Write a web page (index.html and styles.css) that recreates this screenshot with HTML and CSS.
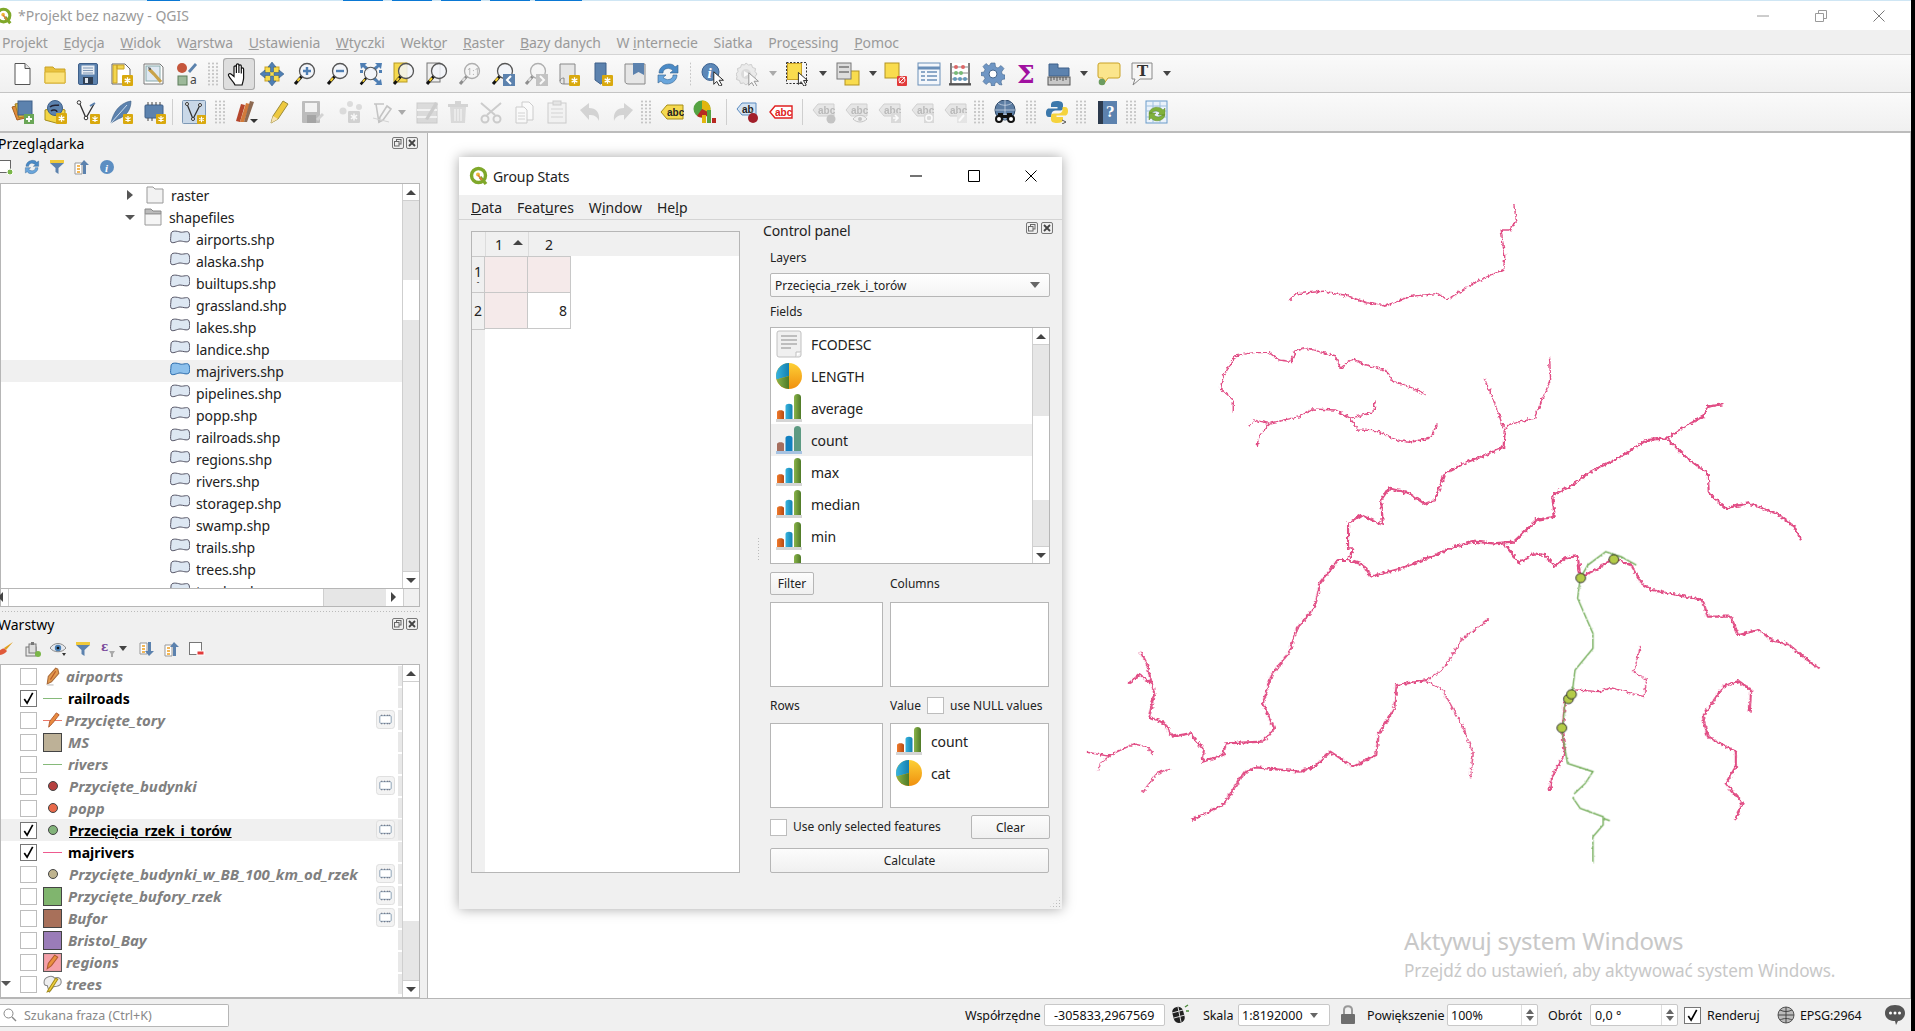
FILE: index.html
```html
<!DOCTYPE html>
<html lang="pl">
<head>
<meta charset="utf-8">
<title>*Projekt bez nazwy - QGIS</title>
<link rel="stylesheet" href="styles.css">
</head>
<body>
<svg class="sprite" aria-hidden="true">
<defs>
<linearGradient id="go"><stop offset="0" stop-color="#ef7a2c"/><stop offset="1" stop-color="#b84a12"/></linearGradient>
<linearGradient id="gb"><stop offset="0" stop-color="#38b4de"/><stop offset="1" stop-color="#1480b0"/></linearGradient>
<linearGradient id="gg"><stop offset="0" stop-color="#8ab44a"/><stop offset="1" stop-color="#4f7a28"/></linearGradient>
<linearGradient id="gp2" x2="0" y2="1"><stop offset="0" stop-color="#fdd035"/><stop offset="1" stop-color="#f0900f"/></linearGradient>
<symbol id="badge" viewBox="0 0 10 10"><rect width="10" height="10" rx="1" fill="#d9a90e"/><path d="M5 2v6M2.4 3.5l5.2 3M2.4 6.5l5.2-3" stroke="#fff" stroke-width="1.2"/></symbol>
<symbol id="qgis" viewBox="0 0 20 20"><circle cx="9.5" cy="9.5" r="7" fill="none" stroke="#7fa82a" stroke-width="3.4"/><path d="M11 11l6 7" stroke="#7fa82a" stroke-width="3.4"/><circle cx="9" cy="8.5" r="2" fill="#f0b93a"/><path d="M9 9l4 5" stroke="#e07a3a" stroke-width="1.6"/></symbol>
<symbol id="new" viewBox="0 0 24 24"><path d="M5 1.5h10l5 5v16H5z" fill="#fff" stroke="#555"/><path d="M15 1.5v5h5" fill="#e4e4e4" stroke="#555"/></symbol>
<symbol id="open" viewBox="0 0 24 24"><path d="M2 5h8l2 2h10v14H2z" fill="#e9c23e" stroke="#c9a227"/><path d="M2 10h20v11H2z" fill="#fbe27c" stroke="#d8b332"/></symbol>
<symbol id="save" viewBox="0 0 24 24"><rect x="2.5" y="1.5" width="19" height="21" rx="1.5" fill="#5c82ae" stroke="#3f608a"/><rect x="5.5" y="3.5" width="13" height="9" fill="#e8edf3"/><path d="M7 6h10M7 8.500h10M7 11h10" stroke="#7f97b5"/><rect x="7" y="15" width="10" height="7" fill="#2f3e52"/><rect x="9" y="16" width="3" height="5" fill="#dfe6ee"/></symbol>
<symbol id="np" viewBox="0 0 24 24"><path d="M3 2h13l5 5v15H3z" fill="#fff" stroke="#666"/><path d="M4 3h4v18H4zM8 3h7v4H8z" fill="#f3d64e" stroke="#c9a227"/><use href="#badge" x="13" y="13" width="11" height="11"/></symbol>
<symbol id="lm" viewBox="0 0 24 24"><path d="M2 2h16l3 3v17H2z" fill="#fff" stroke="#777"/><rect x="4" y="4" width="14" height="15" fill="#dfe8f2" stroke="#8aa"/><path d="M7 7l5 5 7 8" stroke="#c8a24a" stroke-width="3.200" fill="none"/><path d="M6 5l3 1v2H7z" fill="#666"/></symbol>
<symbol id="sm" viewBox="0 0 24 24"><circle cx="7" cy="6" r="5" fill="#c5563c"/><path d="M14 10l7-8" stroke="#5b82ad" stroke-width="2.800"/><rect x="3" y="14" width="9" height="9" fill="#9db99a" stroke="#5c7c5a"/><text x="15" y="22" class="svgt" font-size="12" fill="#444">a</text></symbol>
<symbol id="hand" viewBox="0 0 24 24"><path d="M8 23c-1-3-5-6-6.500-9.500-.5-1.500 1.500-2.500 2.500-1.500l3 2.500V5c0-1.600 2.400-1.600 2.400 0v6V3c0-1.600 2.500-1.600 2.500 0v8V4c0-1.600 2.400-1.600 2.400 0v7.500V7c0-1.500 2.300-1.500 2.300 0v9c0 2.500-1 4-1.500 7z" fill="#fff" stroke="#111" stroke-width="1.200"/></symbol>
<symbol id="pan" viewBox="0 0 24 24"><rect x="5" y="5" width="14" height="14" fill="#f7dc4b" stroke="#c9a227"/><path d="M12 0l4 5h-2.500v5h-3V5H8zM12 24l4-5h-2.500v-5h-3v5H8zM0 12l5-4v2.500h5v3H5V16zM24 12l-5-4v2.500h-5v3h5V16z" fill="#4f7fb4" stroke="#33587f" stroke-width=".5"/></symbol>
<symbol id="lens" viewBox="0 0 24 24"><path d="M9 14l-7 8" stroke="#111" stroke-width="3"/><path d="M7 16l-2.500 3" stroke="#f2cd30" stroke-width="2"/><circle cx="14" cy="9" r="7.500" fill="#f2f5f9" fill-opacity=".85" stroke="#555" stroke-width="1.300"/></symbol>
<symbol id="zi" viewBox="0 0 24 24"><use href="#lens" width="24" height="24"/><path d="M14 5v8M10 9h8" stroke="#4f7fb4" stroke-width="2.400"/></symbol>
<symbol id="zo" viewBox="0 0 24 24"><use href="#lens" width="24" height="24"/><path d="M10 9h8" stroke="#4f7fb4" stroke-width="2.400"/></symbol>
<symbol id="zf" viewBox="0 0 24 24"><path d="M1 1h7L6 3l5 4-3 2-4-4-2 2zM23 1h-7l2 2-5 4 3 2 4-4 2 2zM23 23h-7l2-2-5-4 3-2 4 4 2-2z" fill="#4f7fb4"/><path d="M1 8h3v3H1zM20 8h3v3h-3z" fill="#4f7fb4"/><use href="#lens" width="20" height="20" y="4"/></symbol>
<symbol id="zs" viewBox="0 0 24 24"><rect x="2" y="1" width="13" height="19" fill="#f5d94f" stroke="#b89a22"/><use href="#lens" width="24" height="24"/></symbol>
<symbol id="zl" viewBox="0 0 24 24"><rect x="2" y="1" width="13" height="19" fill="#eee" stroke="#777"/><use href="#lens" width="24" height="24"/></symbol>
<symbol id="zn" viewBox="0 0 24 24"><use href="#lens" width="24" height="24"/><text x="9" y="13" class="svgt" font-size="9" fill="#555">1:1</text></symbol>
<symbol id="zb" viewBox="0 0 24 24"><use href="#lens" width="24" height="24"/><rect x="12" y="12" width="12" height="12" fill="#5c82ae"/><path d="M20 14l-4 4 4 4" stroke="#fff" stroke-width="2" fill="none"/></symbol>
<symbol id="zx" viewBox="0 0 24 24"><use href="#lens" width="24" height="24"/><rect x="12" y="12" width="12" height="12" fill="#888"/><path d="M16 14l4 4-4 4" stroke="#fff" stroke-width="2" fill="none"/></symbol>
<symbol id="nm" viewBox="0 0 24 24"><path d="M3 2h15v20H7c-3 0-4-1-4-3z" fill="#e6e6e6" stroke="#888"/><path d="M3 19c0-2 2-3 4-3v6" fill="none" stroke="#888"/><use href="#badge" x="12" y="13" width="11" height="11"/></symbol>
<symbol id="sb" viewBox="0 0 24 24"><path d="M5 1h11v17l-5.500 4L5 18z" fill="#5c82ae" stroke="#3f608a"/><use href="#badge" x="12" y="13" width="11" height="11"/></symbol>
<symbol id="bm" viewBox="0 0 24 24"><path d="M2 2h20v20H6c-3 0-4-1-4-3z" fill="#e6e6e6" stroke="#888"/><path d="M10 1h11v12l-5.500-3-5.500 3z" fill="#5c82ae"/></symbol>
<symbol id="rf" viewBox="0 0 24 24"><path d="M3 11C3 5 9 2 13 2c3 0 5 1 6 3l3-2v8h-8l3-2.500C15 7 13 6 11 6.500 8 7 7 9 7 11z" fill="#4a8ac6" stroke="#33628f" stroke-width=".6"/><path d="M21 13c0 6-6 9-10 9-3 0-5-1-6-3l-3 2v-8h8l-3 2.500C9 17 11 18 13 17.500c3-.5 4-2.500 4-4.500z" fill="#6aa6dc" stroke="#33628f" stroke-width=".6"/></symbol>
<symbol id="cur" viewBox="0 0 24 24"><path d="M12 10v13l3-3 3 5 2.500-1.200-3-5h4.500z" transform="translate(-3 -2) scale(1.050)" fill="#fff" stroke="#222"/></symbol>
<symbol id="id" viewBox="0 0 24 24"><circle cx="9.500" cy="10" r="8.500" fill="#5c88b8" stroke="#3c6290"/><text x="6.500" y="16" class="svgti" font-size="15" fill="#fff">i</text><use href="#cur" x="4" y="2" width="22" height="22"/></symbol>
<symbol id="ac" viewBox="0 0 24 24"><path d="M10 1l2.500 2 3-.5 1 3 3 1-.5 3L21 12l-2 2.500.5 3-3 1-1 3-3-.5L10 23l-2.500-2-3 .5-1-3-3-1 .5-3L0 12l2-2.500-.5-3 3-1 1-3 3 .5z" fill="#ddd" stroke="#999"/><circle cx="10" cy="12" r="5" fill="#bbb"/><path d="M8 9l5 3-5 3z" fill="#fff"/><use href="#cur" x="4" y="3" width="22" height="22"/></symbol>
<symbol id="sl" viewBox="0 0 24 24"><rect x=".5" y=".5" width="20" height="21" fill="none" stroke="#333" stroke-dasharray="2 1.500"/><rect x="1.500" y="1.500" width="14" height="16" fill="#f9dc4e" stroke="#c9a227"/><use href="#cur" x="4" y="3" width="21" height="21"/></symbol>
<symbol id="sa" viewBox="0 0 24 24"><rect x="9" y="9" width="14" height="14" fill="#f9dc4e" stroke="#b39322"/><rect x="1" y="1" width="14" height="16" fill="#ddd" stroke="#777"/><path d="M3 5h10M3 10h10" stroke="#777" stroke-width="1.500"/></symbol>
<symbol id="ds" viewBox="0 0 24 24"><rect x="1" y="1" width="14" height="15" fill="#f9dc4e" stroke="#b39322"/><rect x="13" y="14" width="10" height="10" rx="1" fill="#e23a3a"/><path d="M15 21l6-6M18 15a3 3 0 1 1-.1 0" stroke="#fff" fill="none"/></symbol>
<symbol id="at" viewBox="0 0 24 24"><rect x="1" y="1" width="22" height="22" fill="#f4f7fb" stroke="#6a8fb8"/><path d="M1 6h22" stroke="#6a8fb8" stroke-width="3"/><path d="M4 10h4M10 10h10M4 14h4M10 14h10M4 18h4M10 18h10" stroke="#6a8fb8" stroke-width="1.400"/></symbol>
<symbol id="tb" viewBox="0 0 24 24"><path d="M3 1v21h18V1M1 22h22" stroke="#555" stroke-width="1.500" fill="#fff"/><path d="M1 22.500h22" stroke="#555" stroke-width="2"/><path d="M3 5h18M3 11h18M3 17h18" stroke="#888"/><circle cx="8" cy="5" r="2" fill="#d66"/><circle cx="15" cy="5" r="2" fill="#d66"/><circle cx="8" cy="11" r="2" fill="#7b7"/><circle cx="13" cy="11" r="2" fill="#7b7"/><circle cx="7" cy="17" r="2" fill="#69b"/><circle cx="12" cy="17" r="2" fill="#69b"/><circle cx="17" cy="17" r="2" fill="#69b"/></symbol>
<symbol id="gr" viewBox="0 0 24 24"><path d="M10 1h4l.5 4 2.500 1 3-2.500 3 3L20.500 10l1 2.500 2.500.5v4l-3 .5-1 2.500L21 23l-3-.5-2-2.500-2 1-.5 3h-3L10 21l-2-1-3 2.500-3-3L4 16.500 3 14 0 13.500v-3L3 10l1-2.500-2-3 3-3L8 4z" fill="#6f96c4" stroke="#46688f" stroke-width=".6"/><circle cx="12" cy="12" r="4" fill="#fff" stroke="#46688f"/></symbol>
<symbol id="sg" viewBox="0 0 24 24"><text x="3" y="21" class="svgs" font-size="25" fill="#a010a0">Σ</text></symbol>
<symbol id="ms" viewBox="0 0 24 24"><path d="M2 2h9v4h11v8H2z" fill="#5c82ae" stroke="#3f608a"/><rect x="1" y="15" width="22" height="8" fill="#c8c8c8" stroke="#555"/><path d="M4 15v4M7 15v3M10 15v4M13 15v3M16 15v4M19 15v3" stroke="#555"/></symbol>
<symbol id="tp" viewBox="0 0 24 24"><path d="M3 1h18a2 2 0 0 1 2 2v11a2 2 0 0 1-2 2H11l-5 7v-7H3a2 2 0 0 1-2-2V3a2 2 0 0 1 2-2z" fill="#fbe58c" stroke="#c9a227"/><circle cx="5" cy="20" r="3.300" fill="#6b9b5f"/></symbol>
<symbol id="tx" viewBox="0 0 24 24"><path d="M2 1h20v16H10l-7 6 2-6H2z" fill="#f6f6f6" stroke="#888"/><text x="7" y="14" class="svgs" font-size="15" fill="#333">T</text></symbol>
<symbol id="dsm" viewBox="0 0 24 24"><path d="M2 7l12-3 5 13-12 3z" fill="#e08a3a" stroke="#a5601f"/><path d="M5 4l12-2 4 13-12 3z" fill="#dcb33c" stroke="#a5801f"/><rect x="8" y="1" width="14" height="14" fill="#5c82ae" stroke="#3f608a"/><rect x="14" y="14" width="10" height="10" fill="#6aa657"/><path d="M19 16v6M16 19h6" stroke="#fff" stroke-width="1.800"/></symbol>
<symbol id="gp" viewBox="0 0 24 24"><path d="M2 10l11-3 9 3v10l-9 3-11-3z" fill="#f2d544" stroke="#a58d1a"/><circle cx="12" cy="8" r="7.500" fill="#5c82ae" stroke="#3f608a"/><path d="M7 7c3-3 6-1 9-2M8 11c2-2 6-1 6 1" stroke="#223" stroke-width="1.500" fill="none"/><use href="#badge" x="13" y="13" width="11" height="11"/></symbol>
<symbol id="ns" viewBox="0 0 24 24"><path d="M3 2l7 16 8-14" fill="none" stroke="#333" stroke-width="1.300"/><circle cx="3" cy="2.500" r="1.800" fill="#fff" stroke="#333"/><circle cx="10" cy="18" r="1.800" fill="#fff" stroke="#333"/><path d="M14 6l5-3" stroke="#5c82ae" stroke-width="2"/><use href="#badge" x="14" y="14" width="10" height="10"/></symbol>
<symbol id="ft" viewBox="0 0 24 24"><path d="M2 23C4 13 10 3 22 1c0 8-4 15-13 18z" fill="#5c82ae" stroke="#3a5c82" stroke-width=".6"/><path d="M2 23L18 5" stroke="#cfe0f0"/><use href="#badge" x="14" y="14" width="10" height="10"/></symbol>
<symbol id="tm" viewBox="0 0 24 24"><rect x="3" y="5" width="18" height="13" rx="1" fill="#5c82ae" stroke="#3f608a"/><path d="M6 2v3M10 2v3M14 2v3M18 2v3M6 18v3M10 18v3" stroke="#444"/><use href="#badge" x="14" y="14" width="10" height="10"/></symbol>
<symbol id="mv" viewBox="0 0 24 24"><rect x=".5" y=".5" width="23" height="23" rx="1" fill="#c9d8e8" stroke="#7d98b5"/><path d="M5 4l6 15 7-14" fill="none" stroke="#333" stroke-width="1.300"/><circle cx="5" cy="4" r="1.500" fill="#fff" stroke="#333"/><circle cx="18" cy="5" r="1.500" fill="#fff" stroke="#333"/><circle cx="11" cy="19" r="1.500" fill="#fff" stroke="#333"/><use href="#badge" x="15" y="15" width="9" height="9"/></symbol>
<symbol id="pc" viewBox="0 0 24 24"><path d="M2 21L7 4l4 1-5 17z" fill="#b5462c"/><path d="M6 22L12 3l4 1-6 18z" fill="#d27a3a"/><path d="M10 22L16 1l4 1-7 20z" fill="#8d6a52"/><path d="M16 19h8l-4 4z" fill="#333"/></symbol>
<symbol id="pe" viewBox="0 0 24 24"><path d="M4 23l2-7L16 1l5 3-10 15z" fill="#eec93f" stroke="#9a8a3a"/><path d="M4 23l2-7 5 3z" fill="#f6e2b0"/></symbol>
<symbol id="sv" viewBox="0 0 24 24"><rect x="2" y="1" width="18" height="22" rx="1" fill="#777"/><rect x="5" y="3" width="12" height="9" fill="#eee"/><rect x="7" y="15" width="9" height="8" fill="#444"/><path d="M17 20l6-6" stroke="#aaa" stroke-width="3"/></symbol>
<symbol id="ap" viewBox="0 0 24 24"><circle cx="4" cy="11" r="3.500" fill="#bbb"/><circle cx="11" cy="4" r="3" fill="#bbb"/><circle cx="20" cy="7" r="3" fill="#bbb"/><use href="#badge" x="9" y="11" width="12" height="12"/></symbol>
<symbol id="sk" viewBox="0 0 24 24"><path d="M4 4h10M6 4l3 19M17 6l4 3-8 11-4 2 1-5z" fill="none" stroke="#888" stroke-width="1.600"/><path d="M3 18l16 4" stroke="#aaa"/></symbol>
<symbol id="te" viewBox="0 0 24 24"><rect x="2" y="3" width="20" height="20" fill="#ccb98b" stroke="#998"/><path d="M2 10h20M2 17h20" stroke="#fff" stroke-width="1.500"/><path d="M10 19L20 2l3 2-10 16z" fill="#999"/></symbol>
<symbol id="trs" viewBox="0 0 24 24"><path d="M2 4h20v3H2z" fill="#aaa"/><rect x="9" y="1" width="6" height="3" fill="#aaa"/><path d="M4 7h16l-1 16H5z" fill="#bbb"/><path d="M9 9v12M12 9v12M15 9v12" stroke="#fff"/></symbol>
<symbol id="sc" viewBox="0 0 24 24"><path d="M2 3l14 12M22 3L8 15" stroke="#999" stroke-width="2"/><circle cx="6" cy="19" r="3.500" fill="none" stroke="#999" stroke-width="2"/><circle cx="18" cy="19" r="3.500" fill="none" stroke="#999" stroke-width="2"/></symbol>
<symbol id="cp" viewBox="0 0 24 24"><path d="M10 2h7l4 4v14H10z" fill="#fff" stroke="#999"/><path d="M4 7h8l3 3v13H4z" fill="#fff" stroke="#999"/><path d="M6 13h7M6 16h7M6 19h7" stroke="#aaa"/></symbol>
<symbol id="ps" viewBox="0 0 24 24"><rect x="3" y="3" width="18" height="20" fill="#eee" stroke="#999"/><rect x="8" y="1" width="8" height="4" fill="#ccc" stroke="#999"/><path d="M6 9h12M6 13h12M6 17h12" stroke="#aaa"/></symbol>
<symbol id="un" viewBox="0 0 24 24"><path d="M2 10l9-7v5c7 0 11 4 10 13-2-5-5-6-10-6v5z" fill="#aaa"/></symbol>
<symbol id="re" viewBox="0 0 24 24"><path d="M22 10l-9-7v5C6 8 2 12 3 21c2-5 5-6 10-6v5z" fill="#aaa"/></symbol>
<symbol id="la" viewBox="0 0 24 24"><path d="M1 12l6-7h16v14H7z" fill="#f5d94f" stroke="#a58d1a"/><text x="7" y="16" class="svgb" font-size="10" fill="#222">abc</text></symbol>
<symbol id="dg" viewBox="0 0 24 24"><circle cx="9" cy="9" r="8.500" fill="#55a342"/><path d="M9 9V.5a8.500 8.500 0 0 1 7.500 12.500z" fill="#e2b60f"/><path d="M9 9l7.500 4A8.500 8.500 0 0 1 4 16z" fill="#b82a22"/><rect x="9" y="15" width="4" height="8" fill="#e2b60f"/><rect x="14" y="10" width="4" height="13" fill="#55a342"/><rect x="19" y="18" width="4" height="5" fill="#b82a22"/></symbol>
<symbol id="lb" viewBox="0 0 24 24"><path d="M1 9l5-6h14v12H6z" fill="#d2e2f2" stroke="#5b8bc0"/><text x="6" y="13" class="svgb" font-size="10" fill="#222">ab</text><path d="M16 10v6" stroke="#888"/><circle cx="17" cy="18" r="5" fill="#a21f2a"/></symbol>
<symbol id="lr" viewBox="0 0 24 24"><path d="M1 12l5-6h17v12H6z" fill="#fff" stroke="#e02020" stroke-width="1.400"/><text x="6" y="16" class="svgb" font-size="10" fill="#e02020">abc</text></symbol>
<symbol id="lg" viewBox="0 0 24 24"><path d="M1 10l5-6h16v12H6z" fill="#ddd" stroke="#bbb"/><text x="6" y="14" class="svgb" font-size="10" fill="#999">abc</text></symbol>
<symbol id="g1" viewBox="0 0 24 24"><use href="#lg" width="24" height="24"/><circle cx="19" cy="19" r="4.500" fill="#aaa"/></symbol>
<symbol id="g2" viewBox="0 0 24 24"><use href="#lg" width="24" height="24"/><path d="M8 19c4-5 10-5 14 0-4 4-10 4-14 0z" fill="#eee" stroke="#aaa"/><circle cx="15" cy="19" r="2" fill="#aaa"/></symbol>
<symbol id="g3" viewBox="0 0 24 24"><use href="#lg" width="24" height="24"/><rect x="13" y="13" width="10" height="10" fill="#ccc"/><path d="M15 18h4M17 15l3 3-3 3" stroke="#fff" stroke-width="1.600" fill="none"/></symbol>
<symbol id="g4" viewBox="0 0 24 24"><use href="#lg" width="24" height="24"/><rect x="13" y="13" width="10" height="10" fill="#ccc"/><circle cx="18" cy="18" r="3" stroke="#fff" stroke-width="1.500" fill="none"/></symbol>
<symbol id="g5" viewBox="0 0 24 24"><use href="#lg" width="24" height="24"/><rect x="13" y="13" width="10" height="10" fill="#ddd"/><path d="M15 21l5-6" stroke="#fff" stroke-width="2"/></symbol>
<symbol id="bi" viewBox="0 0 24 24"><circle cx="12" cy="10" r="10" fill="#5c7da3" stroke="#2f4a6a"/><path d="M2 10h20M12 0v20M5 3c4 3 10 3 14 0M5 17c4-3 10-3 14 0" stroke="#d5e0ec" stroke-width=".7" fill="none"/><circle cx="6" cy="19" r="4" fill="#111"/><circle cx="18" cy="19" r="4" fill="#111"/><rect x="5" y="13" width="5" height="6" fill="#111"/><rect x="14" y="13" width="5" height="6" fill="#111"/><rect x="9" y="15" width="6" height="3" fill="#111"/><circle cx="6" cy="19" r="2" fill="#fff"/><circle cx="18" cy="19" r="2" fill="#fff"/></symbol>
<symbol id="py" viewBox="0 0 24 24"><path d="M12 1c-4 0-6 1-6 3.500V7h6.500v1.500H4C1.500 8.500 1 11 1 13s.5 4 3 4h2.500v-3c0-2 2-3.500 4-3.500h5c1.500 0 2.500-1 2.500-2.500V4.500C18 2 15.500 1 12 1z" fill="#3c78ab"/><path d="M12 23c4 0 6-1 6-3.500V17h-6.500v-1.500H20c2.500 0 3-2.500 3-4.500s-.5-4-3-4h-2.500v3c0 2-2 3.500-4 3.500h-5C7 13.500 6 14.500 6 16v3.500C6 22 8.500 23 12 23z" fill="#f5d33d"/><path d="M17 20l4 2-4 2" fill="none" stroke="#555"/></symbol>
<symbol id="hp" viewBox="0 0 24 24"><rect x="3" y="1" width="19" height="23" fill="#5c82ae"/><rect x="3" y="1" width="5" height="23" fill="#2d3b4e"/><text x="11" y="17" class="svgs" font-size="14" fill="#fff">?</text></symbol>
<symbol id="tr2" viewBox="0 0 24 24"><rect x="1" y="1" width="21" height="22" fill="#eaf2fa" stroke="#6a9bc9"/><path d="M1 6h21M1 11h21M1 17h21M8 1v22M15 1v22" stroke="#9ec0df"/><path d="M4 13c1-6 10-8 14-3l2-2v7h-7l2-2c-3-3-7-2-8 0zM20 15c-1 6-10 8-14 3l-2 2v-7h7l-2 2c3 3 7 2 8 0z" fill="#7fb13c" stroke="#557f24" stroke-width=".4"/></symbol>
<symbol id="pa" viewBox="0 0 16 16"><rect x=".5" y="1.500" width="12" height="12" fill="#fff" stroke="#666"/><circle cx="12" cy="13" r="3" fill="#7ab648" stroke="#fff"/></symbol>
<symbol id="fl" viewBox="0 0 16 16"><path d="M1 2h14v2L9.500 9v6L6.500 13V9L1 4z" fill="#5c82ae"/><path d="M1 1h14v3H1z" fill="#f0c93a"/></symbol>
<symbol id="cl" viewBox="0 0 16 16"><path d="M1 4h7v11H1z" fill="#fff" stroke="#999"/><path d="M3 7h3M3 10h3M3 13h3" stroke="#f0a020" stroke-width="1.500"/><path d="M10 1l5 5h-3v9H9V6H6z" fill="#5c82ae"/></symbol>
<symbol id="xp" viewBox="0 0 16 16"><path d="M1 2h7v11H1z" fill="#fff" stroke="#999"/><path d="M3 5h3M3 8h3M3 11h3" stroke="#f0a020" stroke-width="1.500"/><path d="M10 15l5-5h-3V1H9v9H6z" fill="#5c82ae"/></symbol>
<symbol id="in" viewBox="0 0 16 16"><circle cx="8" cy="8" r="7" fill="#5c8ec2"/><text x="6" y="12.500" class="svgti" font-size="11" fill="#fff">i</text></symbol>
<symbol id="br" viewBox="0 0 16 16"><path d="M15 1L8 9l-2-2z" fill="#e0a020"/><path d="M1 10c2-2 5-3 6-2l2 2c-1 2-5 4-8 4z" fill="#e05a3a"/></symbol>
<symbol id="ag" viewBox="0 0 16 16"><rect x="1" y="6" width="10" height="9" fill="#e8e8e8" stroke="#777"/><rect x="4" y="3" width="7" height="9" fill="#ddd" stroke="#777"/><path d="M6 1h3v3H6z" fill="#777"/><circle cx="13" cy="13" r="3" fill="#7ab648"/></symbol>
<symbol id="ey" viewBox="0 0 16 16"><path d="M0 7c4-6 12-6 16 0-4 5-12 5-16 0z" fill="#e4e8ee" stroke="#8a8a8a"/><circle cx="8" cy="7" r="3.200" fill="#4a7fb4"/><circle cx="8" cy="7" r="1.300" fill="#111"/><path d="M12 12h4l-2 3z" fill="#333"/></symbol>
<symbol id="ex" viewBox="0 0 16 16"><text x="1" y="10" class="svgs" font-size="12" fill="#7b4b9b">ε</text><path d="M9 10h6l-2 3v3h-2v-3z" fill="#aaa"/></symbol>
<symbol id="rm" viewBox="0 0 16 16"><rect x=".5" y="1.500" width="12" height="12" fill="#fff" stroke="#777"/><rect x="8" y="10" width="7" height="4" fill="#e23a3a" stroke="#fff"/></symbol>
<symbol id="fold" viewBox="0 0 18 18"><path d="M1 1h6l2 2h8v14H1z" fill="#f2f2f2" stroke="#999"/></symbol>
<symbol id="fold2" viewBox="0 0 18 18"><path d="M1 1h6l2 2h8v3H1z" fill="#bbb" stroke="#888"/><path d="M1 6h16v11H1z" fill="#f5f5f5" stroke="#999"/></symbol>
<symbol id="shp" viewBox="0 0 20 14"><path d="M1 4c0-4 6-3 9-2s8-2 9 1c1 3 1 6 0 8-2 2-6 0-9 0s-7 3-9 1C0 10 1 7 1 4z" fill="#dde7f2" stroke="#556"/></symbol>
<symbol id="shps" viewBox="0 0 20 14"><path d="M1 4c0-4 6-3 9-2s8-2 9 1c1 3 1 6 0 8-2 2-6 0-9 0s-7 3-9 1C0 10 1 7 1 4z" fill="#8cc0ec" stroke="#2a6aaa"/></symbol>
<symbol id="pen" viewBox="0 0 18 18"><path d="M4 16l1-7 7-8 2 1 1 4-7 8z" fill="#e39a4e" stroke="#a86a3a"/><path d="M7 12l5-8" stroke="#b85a2a" stroke-width="1.200"/><path d="M4 17h6" stroke="#bbb"/></symbol>
<symbol id="penr" viewBox="0 0 20 18"><path d="M0 9h20" stroke="#e87060"/><path d="M6 16l1-6 7-9 3 2-7 9z" fill="#e98a3e" stroke="#b05a30"/></symbol>
<symbol id="reg" viewBox="0 0 18 18"><rect x=".5" y=".5" width="17" height="17" fill="#f4a0a8" stroke="#555"/><path d="M4 15l1-5 6-8 3 2-6 8z" fill="#e9903e" stroke="#b05a30"/></symbol>
<symbol id="tre" viewBox="0 0 18 18"><path d="M1 7c0-6 8-7 10-4 4-2 7 1 6 5-1 3-5 3-7 3L6 16l-2-6C2 10 1 9 1 7z" fill="#eee" stroke="#888"/><path d="M5 14l7-11 2 1-7 11-3 1z" fill="#f2d33e" stroke="#a58d1a"/></symbol>
<symbol id="chip" viewBox="0 0 20 20"><rect x=".5" y=".5" width="19" height="19" rx="3" fill="#f3f3f3" stroke="#ddd"/><rect x="4" y="6" width="12" height="8" rx="1" fill="#fff" stroke="#8aa0b5"/><path d="M6 5v1M9 5v1M12 5v1M14 5v1M6 14v1M9 14v1M12 14v1M14 14v1" stroke="#556"/></symbol>
<symbol id="bars" viewBox="0 0 26 28"><rect y="25" width="26" height="3" fill="#d5d5d5"/><path d="M1 25v-7c0-2.500 7-2.500 7 0v7z" fill="url(#go)"/><path d="M9.500 25V12c0-3 7-3 7 0v13z" fill="url(#gb)"/><path d="M18 25V3c0-4 7-4 7 0v22z" fill="url(#gg)"/></symbol>
<symbol id="barss" viewBox="0 0 26 28"><rect y="25" width="26" height="3" fill="#a6c3e2"/><path d="M1 25v-7c0-2.500 7-2.500 7 0v7z" fill="#a56e5e"/><path d="M9.500 25V12c0-3 7-3 7 0v13z" fill="#1280c0"/><path d="M18 25V3c0-4 7-4 7 0v22z" fill="#5d9a82"/></symbol>
<symbol id="pie" viewBox="0 0 26 28"><circle cx="13" cy="14" r="13" fill="url(#gp2)"/><path d="M13 14V1A13 13 0 0 0 .500 17.500z" fill="url(#gb)"/><path d="M13 14L.500 17.500A13 13 0 0 0 13 27z" fill="url(#gg)"/></symbol>
<symbol id="doc" viewBox="0 0 26 28"><rect x="1" y="1" width="24" height="26" rx="2" fill="#f0f0f0" stroke="#c0c0c0"/><path d="M5 6h16M5 10h16M5 14h16M5 18h10" stroke="#8c8c8c"/><path d="M20 27v-5h5" fill="#fff" stroke="#c0c0c0"/></symbol>
<symbol id="fl1" viewBox="0 0 12 12"><rect x=".5" y=".5" width="11" height="11" rx="1.500" fill="#eee" stroke="#777"/><rect x="4.500" y="2.500" width="4.500" height="4.500" fill="none" stroke="#666"/><rect x="2.500" y="4.500" width="4.500" height="4.500" fill="#eee" stroke="#666"/></symbol>
<symbol id="fl2" viewBox="0 0 12 12"><rect x=".5" y=".5" width="11" height="11" rx="1.500" fill="#eee" stroke="#777"/><path d="M3 3l6 6M9 3l-6 6" stroke="#444" stroke-width="1.800"/></symbol>
<symbol id="chk" viewBox="0 0 16 16"><path d="M3.500 8.500l3 4.500 6-11" fill="none" stroke="#000" stroke-width="1.800"/></symbol>
<symbol id="mouse" viewBox="0 0 20 22"><rect x="3" y="3" width="11" height="16" rx="5" fill="#222" transform="rotate(-15 8 11)"/><path d="M2 9l11-3M4 14l11-3M8 3l3 15" stroke="#ddd"/><path d="M15 3l3-2M16 7l3 0" stroke="#4a8a3a" stroke-width="1.400"/></symbol>
<symbol id="lock" viewBox="0 0 16 20"><path d="M4 9V5c0-5 8-5 8 0v4" fill="none" stroke="#999" stroke-width="2"/><rect x="1" y="9" width="14" height="10" rx="1" fill="#6e6e6e"/></symbol>
<symbol id="globe" viewBox="0 0 18 18"><circle cx="9" cy="9" r="8" fill="#bbb" stroke="#555"/><path d="M1 9h16M9 1v16M3 4c4 2 8 2 12 0M3 14c4-2 8-2 12 0" stroke="#444" fill="none"/></symbol>
<symbol id="msg" viewBox="0 0 20 22"><path d="M10 1c6 0 10 3 10 8s-4 8-7 8l-2 4-1-4C4 17 0 14 0 9s4-8 10-8z" fill="#555"/><circle cx="5.500" cy="9" r="1.500" fill="#fff"/><circle cx="10" cy="9" r="1.500" fill="#fff"/><circle cx="14.500" cy="9" r="1.500" fill="#fff"/></symbol>
<symbol id="srch" viewBox="0 0 14 14"><circle cx="5.500" cy="5.500" r="4.500" fill="none" stroke="#888"/><path d="M9 9l4 4" stroke="#888" stroke-width="1.400"/></symbol>
</defs>
</svg>

<div class="app">
  <div class="strip"><i class="s1"></i><i class="s2"></i><i class="s3"></i><i class="s3"></i><i class="s3"></i><i class="s4"></i></div>
  <header class="titlebar">
    <svg class="logo"><use href="#qgis"/></svg>
    <span class="wintitle">*Projekt bez nazwy - QGIS</span>
    <div class="winbtns">
      <svg class="wb" viewBox="0 0 12 12"><path d="M0 6h12" stroke="#9a9a9a"/></svg>
      <svg class="wb" viewBox="0 0 12 12"><path d="M.5 3.500h8v8h-8zM3.500 3.500v-3h8v8h-3" fill="none" stroke="#9a9a9a"/></svg>
      <svg class="wb" viewBox="0 0 12 12"><path d="M.5.500l11 11M11.500.500l-11 11" stroke="#777"/></svg>
    </div>
  </header>
  <nav class="menubar">
    <span>Projekt</span><span><u>E</u>dycja</span><span><u>W</u>idok</span><span>W<u>a</u>rstwa</span><span><u>U</u>stawienia</span><span><u>W</u>tyczki</span><span>Wekt<u>o</u>r</span><span><u>R</u>aster</span><span><u>B</u>azy danych</span><span>W <u>i</u>nternecie</span><span>Siatka</span><span>Pro<u>c</u>essing</span><span><u>P</u>omoc</span>
  </nav>
  <div class="toolbar">
    <svg class="ic"><use href="#new"/></svg><svg class="ic"><use href="#open"/></svg><svg class="ic"><use href="#save"/></svg><svg class="ic"><use href="#np"/></svg><svg class="ic"><use href="#lm"/></svg><svg class="ic"><use href="#sm"/></svg>
    <i class="grip"></i>
    <svg class="ic on"><use href="#hand"/></svg><svg class="ic"><use href="#pan"/></svg><svg class="ic"><use href="#zi"/></svg><svg class="ic"><use href="#zo"/></svg><svg class="ic"><use href="#zf"/></svg><svg class="ic"><use href="#zs"/></svg><svg class="ic"><use href="#zl"/></svg><svg class="ic off"><use href="#zn"/></svg><svg class="ic"><use href="#zb"/></svg><svg class="ic off"><use href="#zx"/></svg><svg class="ic"><use href="#nm"/></svg><svg class="ic"><use href="#sb"/></svg><svg class="ic"><use href="#bm"/></svg><svg class="ic"><use href="#rf"/></svg>
    <i class="grip thin"></i>
    <svg class="ic"><use href="#id"/></svg><svg class="ic off ml2"><use href="#ac"/></svg><i class="dd off"></i><svg class="ic"><use href="#sl"/></svg><i class="dd"></i><svg class="ic"><use href="#sa"/></svg><i class="dd"></i><svg class="ic mln2"><use href="#ds"/></svg><svg class="ic"><use href="#at"/></svg><svg class="ic mln2"><use href="#tb"/></svg><svg class="ic"><use href="#gr"/></svg><svg class="ic"><use href="#sg"/></svg><svg class="ic"><use href="#ms"/></svg><i class="dd"></i><svg class="ic"><use href="#tp"/></svg><svg class="ic"><use href="#tx"/></svg><i class="dd"></i>
  </div>
  <div class="toolbar second">
    <svg class="ic"><use href="#dsm"/></svg><svg class="ic"><use href="#gp"/></svg><svg class="ic"><use href="#ns"/></svg><svg class="ic"><use href="#ft"/></svg><svg class="ic"><use href="#tm"/></svg>
    <i class="sep mln3"></i>
    <svg class="ic"><use href="#mv"/></svg>
    <i class="grip"></i>
    <svg class="ic"><use href="#pc"/></svg><svg class="ic"><use href="#pe"/></svg><svg class="ic off"><use href="#sv"/></svg><svg class="ic off ml6"><use href="#ap"/></svg><svg class="ic off mln2"><use href="#sk"/></svg><i class="dd off mln5"></i><svg class="ic off"><use href="#te"/></svg><svg class="ic off mln2"><use href="#trs"/></svg><svg class="ic off"><use href="#sc"/></svg><svg class="ic off"><use href="#cp"/></svg><svg class="ic off"><use href="#ps"/></svg><svg class="ic off"><use href="#un"/></svg><svg class="ic off"><use href="#re"/></svg>
    <i class="grip mln3"></i>
    <svg class="ic"><use href="#la"/></svg><svg class="ic"><use href="#dg"/></svg>
    <i class="sep"></i>
    <svg class="ic"><use href="#lb"/></svg><svg class="ic"><use href="#lr"/></svg>
    <i class="sep"></i>
    <svg class="ic off2"><use href="#g1"/></svg><svg class="ic off2"><use href="#g2"/></svg><svg class="ic off2"><use href="#g3"/></svg><svg class="ic off2"><use href="#g4"/></svg><svg class="ic off2"><use href="#g5"/></svg>
    <i class="grip mln3"></i>
    <svg class="ic"><use href="#bi"/></svg>
    <i class="grip"></i>
    <svg class="ic"><use href="#py"/></svg>
    <i class="grip mln2"></i>
    <svg class="ic"><use href="#hp"/></svg>
    <i class="grip mln2"></i>
    <svg class="ic"><use href="#tr2"/></svg>
  </div>

  <main class="main">
    <aside class="dock">
      <section class="panel browser">
        <div class="ptitle"><span>Przeglądarka</span><svg class="pb"><use href="#fl1"/></svg><svg class="pb"><use href="#fl2"/></svg></div>
        <div class="picons b-icons">
          <svg class="pi first"><use href="#pa"/></svg><svg class="pi"><use href="#rf"/></svg><svg class="pi"><use href="#fl"/></svg><svg class="pi"><use href="#cl"/></svg><svg class="pi"><use href="#in"/></svg>
        </div>
        <div class="treebox">
          <div class="treewrap">
            <div class="tree">
              <div class="trow folder"><i class="arr r"></i><svg class="fi"><use href="#fold"/></svg><span>raster</span></div>
              <div class="trow folder"><i class="arr d"></i><svg class="fi"><use href="#fold2"/></svg><span>shapefiles</span></div>
              <div class="trow"><svg class="si"><use href="#shp"/></svg><span>airports.shp</span></div>
              <div class="trow"><svg class="si"><use href="#shp"/></svg><span>alaska.shp</span></div>
              <div class="trow"><svg class="si"><use href="#shp"/></svg><span>builtups.shp</span></div>
              <div class="trow"><svg class="si"><use href="#shp"/></svg><span>grassland.shp</span></div>
              <div class="trow"><svg class="si"><use href="#shp"/></svg><span>lakes.shp</span></div>
              <div class="trow"><svg class="si"><use href="#shp"/></svg><span>landice.shp</span></div>
              <div class="trow sel"><svg class="si"><use href="#shps"/></svg><span>majrivers.shp</span></div>
              <div class="trow"><svg class="si"><use href="#shp"/></svg><span>pipelines.shp</span></div>
              <div class="trow"><svg class="si"><use href="#shp"/></svg><span>popp.shp</span></div>
              <div class="trow"><svg class="si"><use href="#shp"/></svg><span>railroads.shp</span></div>
              <div class="trow"><svg class="si"><use href="#shp"/></svg><span>regions.shp</span></div>
              <div class="trow"><svg class="si"><use href="#shp"/></svg><span>rivers.shp</span></div>
              <div class="trow"><svg class="si"><use href="#shp"/></svg><span>storagep.shp</span></div>
              <div class="trow"><svg class="si"><use href="#shp"/></svg><span>swamp.shp</span></div>
              <div class="trow"><svg class="si"><use href="#shp"/></svg><span>trails.shp</span></div>
              <div class="trow"><svg class="si"><use href="#shp"/></svg><span>trees.shp</span></div>
              <div class="trow"><svg class="si"><use href="#shp"/></svg><span>tundra.shp</span></div>
            </div>
            <div class="vsb t-sb"><b class="up"></b><i class="tk" style="height:79px"></i><i class="th" style="height:40px"></i><i class="tk fill"></i><b class="dn"></b></div>
          </div>
          <div class="hsb"><b class="lf"></b><i class="hth"></i><i class="htk"></i><b class="rt"></b><i class="corner"></i></div>
        </div>
      </section>
      <i class="vgrip"></i>
      <section class="panel layers">
        <div class="ptitle"><span>Warstwy</span><svg class="pb"><use href="#fl1"/></svg><svg class="pb"><use href="#fl2"/></svg></div>
        <div class="picons l-icons">
          <svg class="pi first"><use href="#br"/></svg><svg class="pi"><use href="#ag"/></svg><svg class="pi"><use href="#ey"/></svg><svg class="pi"><use href="#fl"/></svg><svg class="pi"><use href="#ex"/></svg><i class="dd ddp"></i><svg class="pi"><use href="#xp"/></svg><svg class="pi"><use href="#cl"/></svg><svg class="pi"><use href="#rm"/></svg>
        </div>
        <div class="laybox">
          <div class="lrows">
            <div class="lrow"><span class="cb"></span><svg class="sym"><use href="#pen"/></svg><em class="n n1">airports</em><i class="ind"></i></div>
            <div class="lrow on"><span class="cb ck"><svg><use href="#chk"/></svg></span><span class="sym line lgreen"></span><em class="n">railroads</em><i class="ind"></i></div>
            <div class="lrow"><span class="cb"></span><svg class="sym"><use href="#penr"/></svg><em class="n n0">Przycięte_tory</em><svg class="chip"><use href="#chip"/></svg><i class="ind"></i></div>
            <div class="lrow"><span class="cb"></span><span class="sym sq ms"></span><em class="n">MS</em><i class="ind"></i></div>
            <div class="lrow"><span class="cb"></span><span class="sym line lgreen"></span><em class="n">rivers</em><i class="ind"></i></div>
            <div class="lrow"><span class="cb"></span><span class="sym"><i class="dot d1"></i></span><em class="n n2">Przycięte_budynki</em><svg class="chip"><use href="#chip"/></svg><i class="ind"></i></div>
            <div class="lrow"><span class="cb"></span><span class="sym"><i class="dot d2"></i></span><em class="n n2">popp</em><i class="ind"></i></div>
            <div class="lrow on cur"><span class="cb ck"><svg><use href="#chk"/></svg></span><span class="sym"><i class="dot d3"></i></span><em class="n n2 active">Przecięcia_rzek_i_torów</em><svg class="chip"><use href="#chip"/></svg><i class="ind"></i></div>
            <div class="lrow on"><span class="cb ck"><svg><use href="#chk"/></svg></span><span class="sym line lpink"></span><em class="n">majrivers</em><i class="ind"></i></div>
            <div class="lrow"><span class="cb"></span><span class="sym"><i class="dot d4"></i></span><em class="n n2">Przycięte_budynki_w_BB_100_km_od_rzek</em><svg class="chip"><use href="#chip"/></svg><i class="ind"></i></div>
            <div class="lrow"><span class="cb"></span><span class="sym sq gr"></span><em class="n">Przycięte_bufory_rzek</em><svg class="chip"><use href="#chip"/></svg><i class="ind"></i></div>
            <div class="lrow"><span class="cb"></span><span class="sym sq br"></span><em class="n">Bufor</em><svg class="chip"><use href="#chip"/></svg><i class="ind"></i></div>
            <div class="lrow"><span class="cb"></span><span class="sym sq pu"></span><em class="n">Bristol_Bay</em><i class="ind"></i></div>
            <div class="lrow"><span class="cb"></span><svg class="sym"><use href="#reg"/></svg><em class="n n1">regions</em><i class="ind"></i></div>
            <div class="lrow"><i class="arr d tw"></i><span class="cb"></span><svg class="sym"><use href="#tre"/></svg><em class="n n1">trees</em><i class="ind"></i></div>
            <div class="lrow"><span class="spacer"></span><span class="sym sq gr child"></span></div>
          </div>
          <div class="vsb"><b class="up"></b><i class="th" style="height:239px"></i><i class="tk fill"></i><b class="dn"></b></div>
        </div>
      </section>
    </aside>

    <div class="map">
      <svg class="rivers" viewBox="1070 180 800 740" width="800" height="740" aria-hidden="true">
        <defs><filter id="jag" x="-5%" y="-5%" width="110%" height="110%"><feTurbulence type="fractalNoise" baseFrequency="0.3" numOctaves="2" seed="4"/><feDisplacementMap in="SourceGraphic" scale="5" xChannelSelector="R" yChannelSelector="G"/></filter></defs>
        <g filter="url(#jag)" fill="none" stroke="#e14d85" stroke-linejoin="round">
          <g transform="translate(1070 180) scale(.5102 .3333)">
            <polyline class="thin" points="430,360 442,342 500,333 520,342 540,345 580,368 618,378 665,350 720,340 738,360 790,310 850,268 852,230 845,150 862,150 875,120 870,75"/>
            <polyline class="thin" points="695,642 680,630 630,600 620,572 575,552 552,538 530,565 520,528 460,503 440,515 435,545 410,540 390,518 360,518 325,527 300,590 295,625 320,660 320,698"/>
            <polyline class="thin" points="598,658 596,695 550,715 520,690 475,687 450,710 390,730 360,720 350,740"/>
            <polyline class="thin" points="390,732 370,770 367,798"/>
            <polyline class="thin" points="548,712 565,750 600,752 640,780 665,787 705,775 720,733"/>
            <polyline class="thin" points="940,533 942,600 925,660 910,715 860,733 852,750"/>
            <polyline class="thin" points="812,595 830,660 850,745"/>
            <polyline class="mid" points="852,750 850,800 815,825 780,845 735,880 715,960 695,972 665,940 625,925 610,960 613,1035 570,1005 545,1030 545,1105 555,1105 548,1135"/>
            <polyline class="mid" points="1283,672 1250,680 1240,710 1205,740 1170,775 1130,780 1080,830 1020,875 980,920 945,945 950,1010 915,1020 870,1085 830,1090 790,1085 745,1105 700,1135 650,1165 590,1190"/>
            <polyline class="mid" points="850,1090 880,1148 910,1120 930,1125 950,1160 970,1135 995,1128 1000,1190"/>
            <polyline class="mid" points="1170,775 1210,835 1250,880 1252,940 1285,985 1330,970 1385,1000 1420,1040 1433,1082"/>
          </g>
          <g transform="translate(1070 520) scale(.5102 .3333)">
            <polyline class="mid" points="590,170 575,135 545,120 525,120 490,190 480,260 445,325 430,395 395,465 378,550 400,625 378,665 305,670 300,705 260,725 262,690 235,640 200,650 185,610 155,590 165,520 150,430 138,395"/>
            <polyline class="mid" points="115,490 135,465 160,490"/>
            <polyline class="mid" points="1000,170 1030,150 1065,115 1100,135 1120,190 1140,210 1240,240 1250,290 1295,290 1310,345 1350,330 1375,360 1410,375 1445,420 1467,445"/>
            <polyline class="mid" points="238,900 300,855 340,760 365,742 450,755 480,740 510,695 555,740 600,705 605,640 635,570 640,495 700,480"/>
            <polyline class="thin" points="700,480 730,450 770,355 820,298"/>
            <polyline class="thin" points="695,480 730,510 770,620 790,700 785,772"/>
            <polyline class="thin" points="1118,378 1105,455 1130,480 1125,530 1060,503 1040,515 990,510"/>
            <polyline class="mid" points="970,540 965,640 970,700 945,770 940,810"/>
            <polyline class="mid" points="1332,575 1335,510 1310,483 1280,500 1240,590 1250,650 1305,695 1305,740 1285,790 1318,850 1303,900"/>
            <polyline class="thin" points="33,697 75,708 125,672 150,680 163,702"/>
            <polyline class="thin" points="80,705 60,730 55,755"/>
            <polyline class="thin" points="198,746 170,760 142,817"/>
          </g>
        </g>
        <g transform="translate(1070 520) scale(.5102 .3333)">
          <g filter="url(#jag)" fill="none" stroke="#74ad5a">
            <polyline class="thin" points="1110,135 1080,110 1050,95 1015,135 1000,175 995,235 1025,340 1025,385 990,450 985,510 970,550 965,640 975,730 1025,755 1010,790 988,822"/>
            <polyline class="thin" points="985,832 1000,865 1045,890 1045,915 1025,950 1025,1030"/>
            <polyline class="thin" points="1045,895 1058,902"/>
          </g>
          <g class="pts">
            <ellipse cx="1001" cy="174" rx="9.500" ry="14"/><ellipse cx="1066" cy="118" rx="9.500" ry="14"/><ellipse cx="977" cy="537" rx="9.500" ry="14"/><ellipse cx="983" cy="523" rx="9.500" ry="14"/><ellipse cx="964" cy="624" rx="9.500" ry="14"/>
          </g>
        </g>
      </svg>
      <div class="watermark"><div class="wm1">Aktywuj system Windows</div><div class="wm2">Przejdź do ustawień, aby aktywować system Windows.</div></div>
    </div>
  </main>

  <footer class="status">
    <div class="search"><svg class="sr"><use href="#srch"/></svg><span>Szukana fraza (Ctrl+K)</span></div>
    <span class="st s-coord">Współrzędne</span>
    <div class="sfield f-coord">-305833,2967569</div>
    <svg class="st-ic mouse"><use href="#mouse"/></svg>
    <span class="st s-scale">Skala</span>
    <div class="sfield f-scale">1:8192000<i class="dd"></i></div>
    <svg class="st-ic lock"><use href="#lock"/></svg>
    <span class="st s-zoom">Powiększenie</span>
    <div class="sfield f-zoom">100%<i class="spin"><b></b><b></b></i></div>
    <span class="st s-rot">Obrót</span>
    <div class="sfield f-rot">0,0 °<i class="spin"><b></b><b></b></i></div>
    <span class="cb ck s-ren"><svg><use href="#chk"/></svg></span>
    <span class="st s-rtext">Renderuj</span>
    <svg class="st-ic globe"><use href="#globe"/></svg>
    <span class="st s-epsg">EPSG:2964</span>
    <svg class="st-ic msg"><use href="#msg"/></svg>
  </footer>

  <div class="dialog">
    <div class="dtitle">
      <svg class="dlogo"><use href="#qgis"/></svg>
      <span class="dname">Group Stats</span>
      <div class="dbtns">
        <svg class="dw" viewBox="0 0 12 12"><path d="M0 6h12" stroke="#000" stroke-width="1.100"/></svg>
        <svg class="dw" viewBox="0 0 12 12"><path d="M.5.500h11v11H.500z" fill="none" stroke="#000"/></svg>
        <svg class="dw" viewBox="0 0 12 12"><path d="M.5.500l11 11M11.500.500l-11 11" stroke="#000"/></svg>
      </div>
    </div>
    <div class="dmenu"><span><u>D</u>ata</span><span>Feat<u>u</u>res</span><span>W<u>i</u>ndow</span><span>He<u>l</u>p</span></div>
    <div class="dbody">
      <div class="tbl">
        <div class="th0"></div>
        <div class="thd h1">1<i class="sortup"></i></div>
        <div class="thd h2">2</div>
        <div class="th0"></div>
        <div class="rh r1">1<small>-</small></div>
        <div class="td pink"></div>
        <div class="td pink"></div>
        <div></div>
        <div class="rh">2</div>
        <div class="td pink"></div>
        <div class="td val">8</div>
        <div></div>
        <div class="rh rest"></div>
      </div>
      <div class="cp">
        <div class="cptitle"><span>Control panel</span><svg class="pb"><use href="#fl1"/></svg><svg class="pb"><use href="#fl2"/></svg></div>
        <div class="cpin">
          <label class="lbl l-layers">Layers</label>
          <div class="combo"><span>Przecięcia_rzek_i_torów</span><i class="dd"></i></div>
          <label class="lbl l-fields">Fields</label>
          <div class="flist">
            <div class="frows">
              <div class="frow"><svg class="fic"><use href="#doc"/></svg><span>FCODESC</span></div>
              <div class="frow"><svg class="fic"><use href="#pie"/></svg><span>LENGTH</span></div>
              <div class="frow"><svg class="fic"><use href="#bars"/></svg><span>average</span></div>
              <div class="frow hl"><svg class="fic"><use href="#barss"/></svg><span>count</span></div>
              <div class="frow"><svg class="fic"><use href="#bars"/></svg><span>max</span></div>
              <div class="frow"><svg class="fic"><use href="#bars"/></svg><span>median</span></div>
              <div class="frow"><svg class="fic"><use href="#bars"/></svg><span>min</span></div>
              <div class="frow"><svg class="fic"><use href="#bars"/></svg><span>stddev</span></div>
            </div>
            <div class="vsb"><b class="up"></b><i class="tk" style="height:71px"></i><i class="th" style="height:84px"></i><i class="tk fill"></i><b class="dn"></b></div>
          </div>
          <div class="filterrow"><button class="btn b-filter">Filter</button><label class="lbl l-col">Columns</label></div>
          <div class="boxes"><div class="box"></div><div class="box"></div></div>
          <div class="valrow"><label class="lbl l-rows">Rows</label><label class="lbl">Value</label><span class="cb"></span><label class="lbl">use NULL values</label></div>
          <div class="boxes b2">
            <div class="box"></div>
            <div class="box vals">
              <div class="frow"><svg class="fic"><use href="#bars"/></svg><span>count</span></div>
              <div class="frow"><svg class="fic"><use href="#pie"/></svg><span>cat</span></div>
            </div>
          </div>
          <div class="selrow"><span class="cb"></span><label class="lbl">Use only selected features</label><button class="btn b-clear">Clear</button></div>
          <button class="btn b-calc">Calculate</button>
        </div>
      </div>
    </div>
    <i class="spl"></i>
    <i class="szgrip"></i>
  </div>
</div>
</body>
</html>
```

FILE: styles.css
```css
*{box-sizing:border-box}
html,body{margin:0;padding:0;height:100%}
body{font-family:"Noto Sans","Open Sans",sans-serif;font-size:14px;color:#000;background:#000;overflow:hidden}
.sprite{position:absolute;width:0;height:0}
.svgt{font-family:"Noto Sans",sans-serif}
.svgti{font-family:"Liberation Serif",serif;font-style:italic;font-weight:700}
.svgs{font-family:"DejaVu Serif",serif;font-weight:700}
.svgb{font-family:"Liberation Sans",sans-serif;font-weight:700}
.app{position:relative;width:1911px;height:1031px;display:flex;flex-direction:column;overflow:hidden;background:#f0f0f0}

.strip{height:1px;background:#cfe6f4;display:flex;flex:none}
.strip i{height:1px;background:#0a78d4;display:block}
.s1{width:33px;margin-left:147px}
.s2{width:40px;margin-left:163px}
.s3{width:40px;margin-left:9px}
.s4{width:47px;margin-left:5px}

.titlebar{height:29px;flex:none;background:#fff;display:flex;align-items:center;position:relative}
.logo{width:18px;height:18px;margin-left:-5px;flex:none}
.wintitle{margin-left:5px;font-size:14px;color:#9a9a9a}
.winbtns{margin-left:auto;display:flex;gap:46px;padding-right:26px;align-items:center}
.wb{width:12px;height:12px}

.menubar{height:25px;flex:none;background:#f0f0f0;border-bottom:1px solid #d4d4d4;display:flex;align-items:center;gap:15.700px;padding-left:2px;color:#9a9a9a;font-size:14px;letter-spacing:-.1px}
.toolbar{height:38px;flex:none;display:flex;align-items:center;gap:9px;padding-left:10px;background:linear-gradient(#fafafa,#f0f0f0);border-bottom:1px solid #c4c4c4}
.toolbar.second{height:40px;border-bottom:2px solid #bcbcbc}
.ic{width:24px;height:24px;flex:none;overflow:visible}
.ic.on{background:#dedede;box-shadow:0 0 0 3px #dedede,0 0 0 4px #aaa;border-radius:1px}
.off{filter:grayscale(1) opacity(.45)}
.off2{filter:grayscale(1) opacity(.65)}
.ml2{margin-left:2px}.ml6{margin-left:6px}
.mln2{margin-left:-2px}.mln3{margin-left:-3px}.mln5{margin-left:-5px}
.grip{display:block;flex:none;width:10px;height:26px;background:radial-gradient(circle,#c6c6c6 .7px,transparent 1px) center/4px 3.500px repeat}
.grip.thin{width:3px;background-size:3px 3.500px}
.sep{display:block;flex:none;width:1px;height:26px;background:#cfcfcf}
.dd{display:block;flex:none;width:0;height:0;border-left:4.500px solid transparent;border-right:4.500px solid transparent;border-top:5px solid #444}
.dd.off{border-top-color:#aaa;filter:none}

.main{flex:1;display:flex;min-height:0}
.dock{width:428px;flex:none;display:flex;flex-direction:column;border-right:1px solid #b6b6b6;padding-right:7px}
.panel{display:flex;flex-direction:column}
.ptitle{display:flex;align-items:center;height:20px;flex:none;padding-right:2px;font-size:14px}
.ptitle span{margin-left:-2px;margin-right:auto}
.pb{width:12px;height:12px;margin-left:2px;flex:none}
.picons{height:28px;margin-bottom:2px;flex:none;display:flex;align-items:center;gap:9px}
.pi{width:16px;height:16px;flex:none}
.pi.first{margin-left:-2px}
.ddp{margin-left:-6px;margin-right:3px}
.browser{height:474px}
.b-icons .pi.first{margin-right:1px}
.treebox{height:424px;border:1px solid #b6b6b6;background:#fff;display:flex;flex-direction:column}
.treewrap{flex:1;display:flex;min-height:0}
.tree{flex:1;overflow:hidden}
.trow{height:22px;display:flex;align-items:center;padding-left:169px;color:#222;font-size:14px;letter-spacing:-.1px}
.trow.folder{padding-left:126px}
.trow span{margin-left:6px}
.trow.folder span{margin-left:7px}
.trow.sel{background:#f0f0f0}
.si{width:20px;height:14px;margin-bottom:4px;flex:none}
.fi{width:18px;height:18px;margin-left:9px;flex:none}
.arr{display:block;width:0;height:0;flex:none}
.arr.r{border-top:5px solid transparent;border-bottom:5px solid transparent;border-left:6px solid #555;margin-right:4px}
.arr.d{border-left:5px solid transparent;border-right:5px solid transparent;border-top:5px solid #555;margin-left:-2px}
.vsb{width:17px;flex:none;border-left:1px solid #cfcfcf;display:flex;flex-direction:column;background:#fff}
.vsb .up,.vsb .dn{height:17px;flex:none;position:relative;background:#fff}
.vsb .up:after,.vsb .dn:after{content:"";position:absolute;left:3px;top:6px;border-left:5px solid transparent;border-right:5px solid transparent}
.vsb .up:after{border-bottom:5px solid #444}
.vsb .dn:after{border-top:5px solid #444}
.vsb .up{border-bottom:1px solid #cfcfcf}
.vsb .dn{border-top:1px solid #cfcfcf}
.vsb .tk{display:block;background:#e6e6e6;flex:none}
.vsb .tk.fill{flex:1}
.vsb .th{display:block;background:#fff;flex:none}
.hsb{height:18px;flex:none;border-top:1px solid #b6b6b6;display:flex;background:#fff}
.hsb .lf{width:8px;flex:none;border-right:1px solid #cfcfcf;position:relative}
.hsb .lf:after{content:"";position:absolute;left:-3px;top:3px;border-top:5px solid transparent;border-bottom:5px solid transparent;border-right:5px solid #444}
.hth{display:block;width:314px;flex:none}
.htk{display:block;width:63px;flex:none;background:#e6e6e6;border-left:1px solid #cfcfcf}
.rt{width:17px;flex:none;position:relative}
.rt:after{content:"";position:absolute;left:5px;top:3px;border-top:5px solid transparent;border-bottom:5px solid transparent;border-left:5px solid #444}
.corner{display:block;width:18px;flex:1;border-left:1px solid #cfcfcf;background:#f0f0f0}
.vgrip{display:block;height:8px;flex:none;background:radial-gradient(circle,#bbb .7px,transparent 1px) 199px 3px/3px 3px repeat-x}
.layers{flex:1;min-height:0}
.layers .ptitle{height:18px}
.layers .picons{height:31px;margin-bottom:0}
.l-icons .pi:nth-child(2){margin-left:2px}
.laybox{flex:1;border:1px solid #b6b6b6;background:#fff;display:flex;min-height:0}
.lrows{flex:1;overflow:hidden;min-width:0}
.lrow{height:22px;display:flex;align-items:center;position:relative;padding-left:19px;font-weight:700;color:#808080;font-size:14px}
.lrow.on{color:#000}
.lrow.cur{background:#f0f0f0}
.n{font-style:italic;font-size:15px;margin-left:6px;white-space:nowrap}
.lrow.on .n{font-style:normal;font-size:14px}
.n.n0{margin-left:3px}.n.n1{margin-left:4px}.n.n2{margin-left:7px}
.n.active{text-decoration:underline;font-style:normal}
.cb{display:inline-flex;width:17px;height:17px;border:1px solid #bdbdbd;background:#fff;flex:none}
.cb.ck{border-color:#777}
.cb svg{width:15px;height:15px}
.sym{width:19px;height:19px;margin-left:6px;flex:none;display:flex;align-items:center;justify-content:center}
.line{height:1px;display:block}
.lgreen{background:#86ba7a}
.lpink{background:#ee5a8f}
.sq{border:1px solid #444;display:block}
.ms{background:#bdb197}
.gr{background:#80b56e}
.br{background:#a8705a}
.pu{background:#9a7cb8}
.dot{display:block;width:10px;height:10px;border-radius:50%;border:1px solid #444}
.d1{background:#b5403f}
.d2{background:#e8694a}
.d3{background:#82b37a}
.d4{background:#bfb48f}
.chip{width:19px;height:19px;position:absolute;left:375px;top:1px}
.ind{position:absolute;left:397px;top:1px;width:4px;height:20px;background:#e8e8e8;display:block}
.tw{position:absolute;left:2px;top:8px;margin:0}
.spacer{width:44px;flex:none}
.child{margin-top:18px}

.map{flex:1;background:#fff;position:relative;overflow:hidden;border-right:1px solid #c8c8c8}
.rivers{position:absolute;left:642px;top:47px}
.thin{stroke-width:1.400;vector-effect:non-scaling-stroke}
.mid{stroke-width:2.200;vector-effect:non-scaling-stroke}
.pts ellipse{fill:#b3cb48;stroke:#2c2c2c;stroke-width:1;vector-effect:non-scaling-stroke}
.watermark{position:absolute;left:976px;top:792px;color:#c8c8c8}
.wm1{font-size:24px;line-height:32px;letter-spacing:-.2px}
.wm2{font-size:17.200px;line-height:22px;margin-top:3px;letter-spacing:-.1px;white-space:nowrap}

.status{height:33px;flex:none;border-top:1px solid #b6b6b6;background:#f0f0f0;display:flex;align-items:center;position:relative;font-size:12.500px}
.search{width:229px;height:23px;flex:none;background:#fff;border:1px solid #b6b6b6;border-left:0;border-radius:0 2px 2px 0;display:flex;align-items:center;color:#888;font-size:12.500px}
.sr{width:14px;height:14px;margin:0 7px 0 3px}
.st{white-space:nowrap;color:#111;letter-spacing:-.1px;flex:none;display:block}
.sfield{height:22px;background:#fff;border:1px solid #c8c8c8;border-radius:2px;display:flex;align-items:center;color:#111;padding-left:3px;position:relative;flex:none}
.s-coord{margin-left:736px;width:75px}
.f-coord{width:121px;margin-left:4px;padding-left:9px}
.st-ic{flex:none}
.mouse{width:20px;height:22px;margin-left:5px}
.s-scale{margin-left:13px;width:32px}
.f-scale{width:92px;margin-left:3px}
.f-scale .dd{position:absolute;right:11px;top:8px;border-top-color:#666}
.lock{width:16px;height:20px;margin-left:10px}
.s-zoom{margin-left:11px;width:76px}
.f-zoom{width:91px;margin-left:4px}
.spin{position:absolute;right:0;top:0;bottom:0;width:16px;border-left:1px solid #ddd;display:flex;flex-direction:column;justify-content:center;gap:2px;align-items:center}
.spin b{display:block;width:0;height:0;border-left:4px solid transparent;border-right:4px solid transparent}
.spin b:first-child{border-bottom:5px solid #666}
.spin b:last-child{border-top:5px solid #666}
.s-rot{margin-left:10px;width:34px}
.f-rot{width:88px;margin-left:8px;padding-left:4px}
.s-ren{margin-left:6px}
.s-rtext{margin-left:6px;width:56px}
.globe{width:18px;height:18px;margin-left:14px}
.s-epsg{margin-left:5px;width:64px}
.msg{width:20px;height:22px;margin-left:21px}

.dialog{position:absolute;left:459px;top:157px;width:603px;height:752px;background:#f0f0f0;box-shadow:0 0 12px rgba(0,0,0,.35);display:flex;flex-direction:column;font-size:12px}
.dtitle{height:38px;flex:none;background:#fff;display:flex;align-items:center;padding-left:10px}
.dlogo{width:20px;height:20px;flex:none}
.dname{margin-left:4px;font-size:14px;color:#222;letter-spacing:-.1px}
.dbtns{margin-left:auto;display:flex;align-items:center;gap:45px;padding-right:25px}
.dw{width:12px;height:12px;flex:none}
.dw:first-child{width:14px}
.dmenu{height:25px;flex:none;border-bottom:1px solid #d4d4d4;display:flex;align-items:center;gap:15px;padding-left:12px;font-size:14px;color:#222}
.dbody{flex:1;display:flex;min-height:0;padding:11px 12px 36px 12px}
.tbl{width:269px;flex:none;border:1px solid #b6b6b6;background:#fff;display:grid;grid-template-columns:13px 43px 43px 1fr;grid-template-rows:24px 36px 37px 1fr;font-size:14px}
.th0{background:#f0f0f0}
.thd{background:#f0f0f0;border-left:1px solid #dcdcdc;display:flex;align-items:center;justify-content:center;position:relative;color:#222}
.h1{padding-right:16px}
.h2{padding-right:2px}
.sortup{position:absolute;right:5px;top:8px;border-left:5px solid transparent;border-right:5px solid transparent;border-bottom:5px solid #444}
.rh{background:#f0f0f0;border-top:1px solid #c8c8c8;border-right:1px solid #c8c8c8;display:flex;flex-direction:column;align-items:center;justify-content:center;color:#222;line-height:1}
.r1 small{font-size:8px;line-height:6px}
.rh.rest{grid-column:1;border-right:0}
.td{border-top:1px solid #c8c8c8;border-right:1px solid #c8c8c8;display:flex;align-items:center;justify-content:flex-end;padding-right:3px;color:#222}
.td.pink{background:#f5eaea}
.td.val{border-bottom:1px solid #c8c8c8}
.td.pink:nth-child(10){border-bottom:1px solid #c8c8c8}
.cp{flex:1;margin-left:23px;margin-right:-12px;display:flex;flex-direction:column}
.cptitle{height:0;margin-top:-1px;display:flex;align-items:center;padding-right:9px;font-size:14px;color:#222;flex:none}
.cptitle span{margin-right:auto;letter-spacing:-.1px}
.cptitle .pb{margin-left:3px;margin-top:-4px}
.cpin{padding:20px 12px 0 7px;display:flex;flex-direction:column}
.lbl{display:block;font-size:12px;color:#222;white-space:nowrap;line-height:16px}
.combo{height:24px;margin-top:7px;background:linear-gradient(#fff,#f4f4f4);border:1px solid #b6b6b6;border-radius:2px;display:flex;align-items:center;justify-content:space-between;padding:0 9px 0 4px;color:#222}
.combo .dd{border-top-color:#666;border-left-width:5px;border-right-width:5px;border-top-width:6px}
.l-fields{margin-top:7px}
.flist{height:237px;margin-top:7px;border:1px solid #b6b6b6;background:#fff;display:flex}
.frows{flex:1;overflow:hidden;min-width:0}
.frow{height:32px;display:flex;align-items:center;padding-left:5px;font-size:14px;color:#222;flex:none;letter-spacing:-.1px}
.frow.hl{background:#f0f0f0}
.fic{width:26px;height:28px;margin-right:9px;flex:none}
.filterrow{height:23px;margin-top:8px;display:flex;align-items:center}
.btn{font:inherit;font-size:12px;color:#222;background:linear-gradient(#fcfcfc,#f0f0f0);border:1px solid #b6b6b6;border-radius:2px;padding:0;display:block}
.b-filter{width:44px;height:23px}
.l-col{margin-left:76px}
.boxes{height:85px;margin-top:7px;display:grid;grid-template-columns:113px 159px;gap:7px}
.box{background:#fff;border:1px solid #b6b6b6}
.b2{margin-top:9px}
.valrow{height:17px;margin-top:10px;display:flex;align-items:center}
.l-rows{width:120px}
.valrow .cb{margin:0 6px}
.vals{padding-top:1px}
.selrow{height:24px;margin-top:7px;display:flex;align-items:center}
.selrow .lbl{margin-left:6px}
.b-clear{width:79px;height:24px;margin-left:auto}
.b-calc{height:25px;margin-top:9px;width:279px}
.spl{position:absolute;left:298px;top:380px;width:3px;height:24px;background:radial-gradient(circle,#bbb .7px,transparent 1px) 0 0/3px 3px repeat-y}
.szgrip{position:absolute;right:1px;bottom:1px;width:12px;height:12px;background:radial-gradient(circle,#bbb .8px,transparent 1px) 0 0/3px 3px;clip-path:polygon(100% 0,100% 100%,0 100%)}
```
